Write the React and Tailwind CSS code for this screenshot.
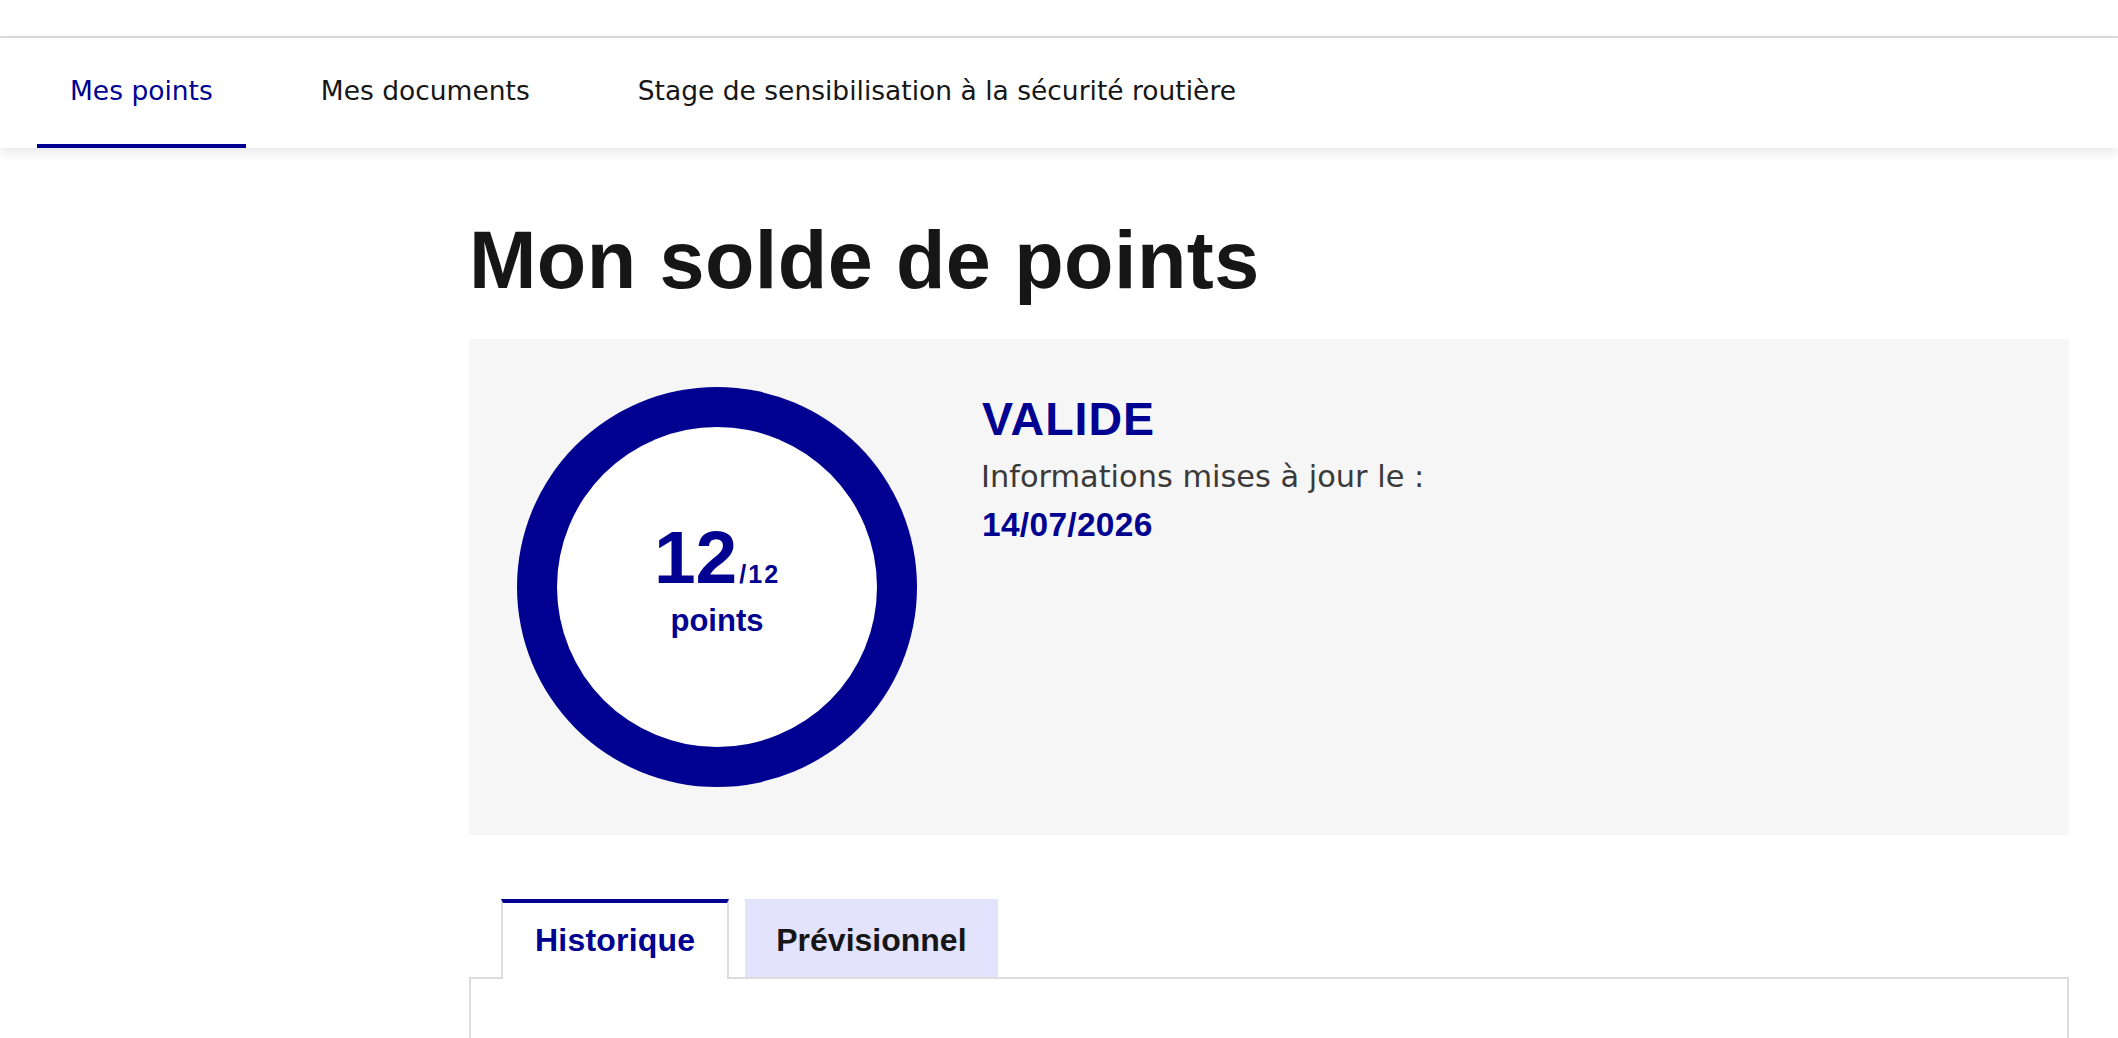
import React from "react";

const SANS = "font-['Liberation_Sans',Arial,sans-serif]";
const WIDE = "font-['DejaVu_Sans',sans-serif]";

function NavItem({ label, active }) {
  return (
    <a
      href="#"
      className={`relative flex h-full items-center px-[33px] pb-[4px] ${WIDE} text-[26.5px] leading-[30px] whitespace-nowrap ${
        active ? "text-[#000091]" : "text-[#161616]"
      }`}
    >
      {label}
      {active && <span className="absolute bottom-0 left-0 right-0 h-[4px] bg-[#000091]" />}
    </a>
  );
}

export default function App() {
  return (
    <div className="relative h-[1038px] w-[2118px] overflow-hidden bg-white">
      <div className="h-[36px] bg-white" />
      <div className="h-[2px] bg-[#dddddd]" />
      <nav className="relative z-20 flex h-[110px] gap-[42px] bg-white pl-[37px] shadow-[0_4px_12px_0_rgba(0,0,18,0.10)]">
        <NavItem label="Mes points" active />
        <NavItem label="Mes documents" />
        <NavItem label="Stage de sensibilisation à la sécurité routière" />
      </nav>

      <main className="ml-[469px] w-[1600px]">
        <h1 className={`mt-[68px] ${SANS} text-[81px] font-bold leading-[88px] tracking-[0.4px] text-[#161616]`}>
          Mon solde de points
        </h1>

        <section className="mt-[35px] flex h-[496px] bg-[#f6f6f6] p-[48px]">
          <div className="flex h-[400px] w-[400px] shrink-0 items-center justify-center rounded-full bg-[#000091]">
            <div className={`flex h-[320px] w-[320px] flex-col items-center justify-center rounded-full bg-white pb-[8px] ${SANS} font-bold text-[#000091]`}>
              <div className="flex h-[60px] items-baseline">
                <span className="text-[75px] leading-[60px]">12</span>
                <span className="ml-[2px] text-[25px] leading-[25px] tracking-[2px]">/12</span>
              </div>
              <div className="mt-[16px] text-[31px] leading-[36px]">points</div>
            </div>
          </div>

          <div className="ml-[65px] flex flex-col">
            <div className={`mt-[4px] ${SANS} text-[46.5px] font-bold leading-[56px] tracking-[1px] text-[#000091]`}>VALIDE</div>
            <p className={`ml-[-1px] mt-[10px] ${WIDE} text-[30.4px] leading-[40px] text-[#3a3a3a]`}>
              Informations mises à jour le :
            </p>
            <p className={`mt-[8px] ${SANS} text-[33.5px] font-bold leading-[40px] tracking-[0.3px] text-[#000091]`}>14/07/2026</p>
          </div>
        </section>

        <div className="mt-[64px]">
          <div className={`flex h-[78px] items-start gap-[16px] pl-[32px] ${SANS} text-[32px] font-bold`}>
            <button className="relative z-10 flex h-[80px] items-center border-x-2 border-t-4 border-x-[#dddddd] border-t-[#000091] bg-white px-[32px] pb-[2px] tracking-[0.2px] text-[#000091]">
              Historique
            </button>
            <button className="flex h-[78px] items-center bg-[#e3e3fd] px-[31px] pt-[4px] text-[#161616]">
              Prévisionnel
            </button>
          </div>
          <div className="h-[200px] border-2 border-[#dddddd] bg-white" />
        </div>
      </main>
    </div>
  );
}
